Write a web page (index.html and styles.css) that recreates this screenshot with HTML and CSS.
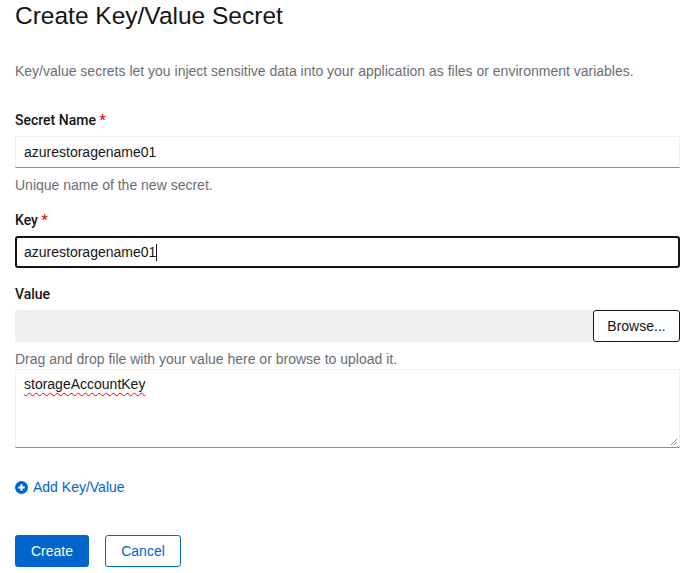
FILE: index.html
```html
<!DOCTYPE html>
<html>
<head>
<meta charset="utf-8">
<link rel="stylesheet" href="styles.css">
</head>
<body>
<div class="page">
  <h1 class="title">Create Key/Value Secret</h1>
  <p class="desc">Key/value secrets let you inject sensitive data into your application as files or environment variables.</p>

  <div class="group">
    <label class="label">Secret Name <span class="req">*</span></label>
    <div class="input">azurestoragename01</div>
    <div class="help">Unique name of the new secret.</div>
  </div>

  <div class="group">
    <label class="label">Key <span class="req">*</span></label>
    <div class="input focused">azurestoragename01<span class="caret"></span></div>
  </div>

  <div class="group group-value">
    <label class="label">Value</label>
    <div class="file-row">
      <div class="file-field"></div>
      <div class="browse">Browse...</div>
    </div>
    <div class="help">Drag and drop file with your value here or browse to upload it.</div>
    <div class="textarea"><span class="spell">storageAccountKey</span>
      <svg class="grip" width="8" height="8" viewBox="0 0 8 8"><path d="M7 1 L1 7 M7 4 L4 7" stroke="#888" stroke-width="1"/></svg>
    </div>
  </div>

  <div class="add-link">
    <svg class="plus" width="13" height="13" viewBox="0 0 16 16"><circle cx="8" cy="8" r="8" fill="#0066cc"/><path d="M8 4v8M4 8h8" stroke="#fff" stroke-width="2.4"/></svg>
    <span>Add Key/Value</span>
  </div>

  <div class="actions">
    <div class="btn primary">Create</div>
    <div class="btn secondary">Cancel</div>
  </div>
</div>
</body>
</html>
```
FILE: styles.css
```css
html, body { margin: 0; padding: 0; background: #fff; }
body { font-family: "Liberation Sans", Arial, sans-serif; color: #151515; }
.page { padding: 0 11px 0 15px; }
.title { margin: 0; padding-top: 4px; font-size: 24.5px; font-weight: 400; line-height: 24px; height: 24px; }
.desc { margin: 34px 0 0; font-size: 14px; line-height: 18px; color: #6a6e73; }
.group { margin-top: 31px; }
.group + .group { margin-top: 17px; }
.label { display: block; font-family: Roboto, "Liberation Sans", sans-serif; font-size: 14px; font-weight: 500; line-height: 18px; margin-bottom: 7px; }
.req { color: #c9190b; }
.input { box-sizing: border-box; height: 32px; border: 1px solid #f0f0f0; border-bottom-color: #8a8d90; padding: 0 8px; font-size: 14px; line-height: 30px; display: flex; align-items: center; }
.input.focused { border: 2px solid #151515; border-radius: 3px; padding: 0 7px; }
.caret { display: inline-block; width: 1px; height: 17px; background: #151515; }
.help { font-size: 14px; line-height: 18px; color: #6a6e73; margin-top: 8px; }
.file-row { display: flex; height: 32px; }
.file-field { flex: 1; background: #f0f0f0; }
.browse { box-sizing: border-box; width: 87px; border: 1px solid #151515; border-radius: 3px; font-size: 14px; display: flex; align-items: center; justify-content: center; }
.group-value .help { margin-top: 8px; }
.textarea { position: relative; box-sizing: border-box; height: 79px; border: 1px solid #f0f0f0; border-bottom-color: #8a8d90; padding: 5px 8px; font-size: 14px; line-height: 18px; margin-top: 1px; }
.spell { text-decoration: underline wavy #e00; text-decoration-thickness: 1px; text-underline-offset: 3px; }
.grip { position: absolute; right: 1px; bottom: 1px; }
.add-link { display: flex; align-items: center; gap: 5px; margin-top: 30px; color: #0066cc; font-size: 14px; line-height: 18px; }
.actions { display: flex; gap: 16px; margin-top: 39px; }
.btn { box-sizing: border-box; height: 32px; display: flex; align-items: center; justify-content: center; font-size: 14px; border-radius: 3px; }
.primary { width: 74px; background: #0066cc; color: #fff; }
.secondary { width: 76px; border: 1px solid #0066cc; color: #0066cc; }
```
